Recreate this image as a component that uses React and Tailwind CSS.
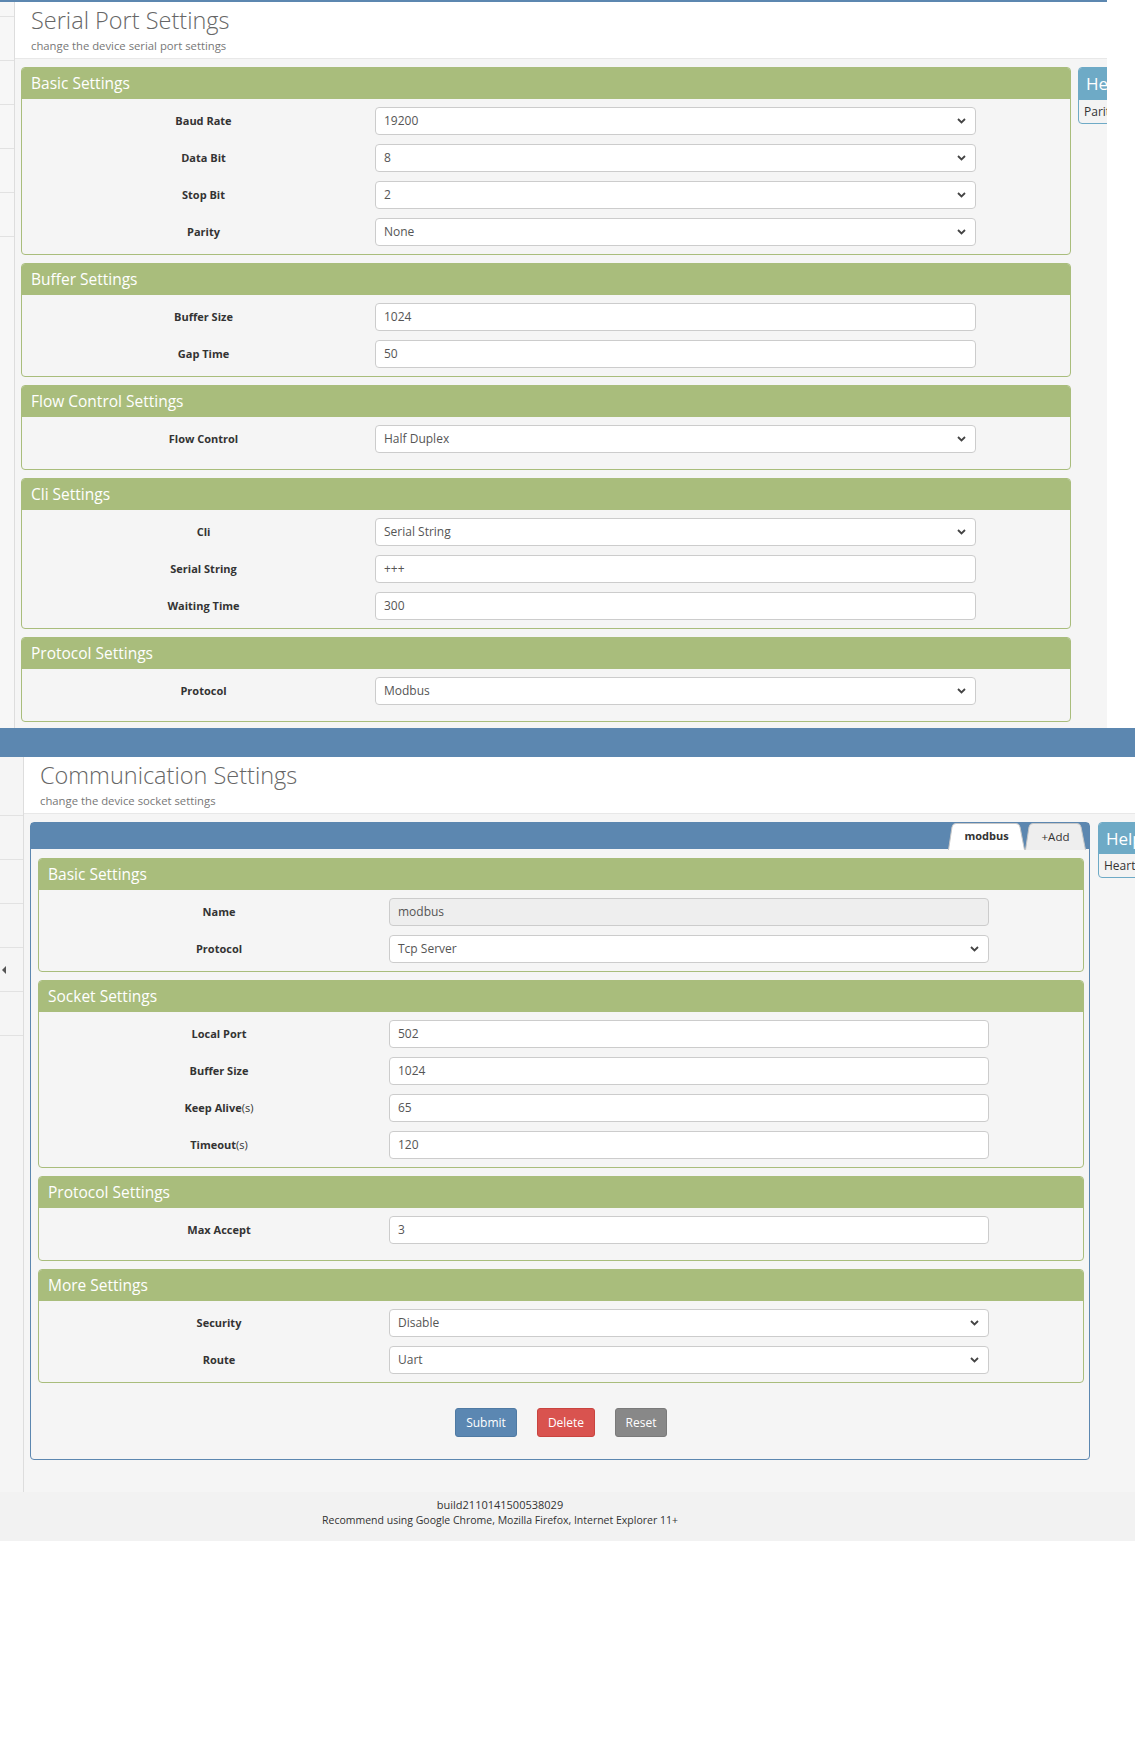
import React from "react";

function Chevron() {
  return (
    <svg width="9" height="6" viewBox="0 0 9 6" className="shrink-0">
      <path d="M1 1 L4.5 4.5 L8 1" fill="none" stroke="#444" strokeWidth="1.8" />
    </svg>
  );
}

function Field({ label, suffix, value, select, disabled, labelCls, inputCls }) {
  return (
    <div className="flex items-center h-[28px]">
      <div className={`${labelCls} text-center text-[11px] font-bold text-[#333]`}>
        {label}
        {suffix ? <span className="font-normal">{suffix}</span> : null}
      </div>
      <div
        className={`${inputCls} h-[28px] border border-[#ccc] rounded-[4px] ${
          disabled ? "bg-[#eeeeee]" : "bg-white"
        } pl-[8px] pr-[9px] flex items-center justify-between text-[12px] text-[#555]`}
      >
        <span>{value}</span>
        {select ? <Chevron /> : null}
      </div>
    </div>
  );
}

function Panel({ title, rows, wide, panelCls }) {
  const labelCls = wide ? "w-[343px]" : "w-[340px]";
  const inputCls = wide ? "w-[601px]" : "w-[600px]";
  return (
    <div className={`${panelCls} rounded-[4px] border border-[#a9bd7c] overflow-hidden`}>
      <div className="h-[31px] bg-[#a9bd7c] pl-[9px] flex items-center text-[15.5px] text-white">
        {title}
      </div>
      <div
        className={`flex flex-col gap-[9px] pt-[8px] pb-[8px] pl-[10px] ${
          rows.length === 1 ? "min-h-[52px]" : ""
        }`}
      >
        {rows.map((r, i) => (
          <Field key={i} {...r} labelCls={labelCls} inputCls={inputCls} />
        ))}
      </div>
    </div>
  );
}

function PageHeader({ title, subtitle }) {
  return (
    <div className="h-[57px] bg-white border-b border-[#e8e8e8] pl-[16px] pt-[4px]">
      <div className="text-[23.5px] leading-[28px] font-light text-[#666]">{title}</div>
      <div className="mt-[4px] text-[11.3px] leading-[16px] text-[#777]">{subtitle}</div>
    </div>
  );
}

function Help({ title, text, cls, headCls }) {
  return (
    <div className={`${cls} shrink-0 rounded-[4px] border border-[#6eaac6] bg-[#f3f3f3] overflow-hidden`}>
      <div className={`${headCls} bg-[#6eaac6] pl-[7px] flex items-center text-[17px] text-white`}>
        {title}
      </div>
      <div className="h-[23px] pl-[5px] flex items-center text-[12px] text-[#333]">{text}</div>
    </div>
  );
}

function Tab({ w, label, active, widthCls }) {
  return (
    <div className={`relative z-10 ${widthCls} h-[27px] flex items-center justify-center`}>
      <svg
        className="absolute inset-0"
        width={w}
        height="27"
        viewBox={`0 0 ${w} 27`}
        preserveAspectRatio="none"
      >
        <path
          d={`M0.5 27 L4 4 Q4.6 0.5 8 0.5 L${w - 9} 0.5 Q${w - 5.6} 0.5 ${w - 5} 4 L${w - 0.5} 27`}
          fill={active ? "#ffffff" : "#eeeeee"}
          stroke="#c6c6c6"
          strokeWidth="1"
        />
      </svg>
      <span className={`relative text-[#333] ${active ? "font-bold text-[11px]" : "text-[11.5px]"}`}>{label}</span>
    </div>
  );
}

export default function App() {
  const topPanels = [
    {
      title: "Basic Settings",
      rows: [
        { label: "Baud Rate", value: "19200", select: true },
        { label: "Data Bit", value: "8", select: true },
        { label: "Stop Bit", value: "2", select: true },
        { label: "Parity", value: "None", select: true },
      ],
    },
    {
      title: "Buffer Settings",
      rows: [
        { label: "Buffer Size", value: "1024" },
        { label: "Gap Time", value: "50" },
      ],
    },
    {
      title: "Flow Control Settings",
      rows: [{ label: "Flow Control", value: "Half Duplex", select: true }],
    },
    {
      title: "Cli Settings",
      rows: [
        { label: "Cli", value: "Serial String", select: true },
        { label: "Serial String", value: "+++" },
        { label: "Waiting Time", value: "300" },
      ],
    },
    {
      title: "Protocol Settings",
      rows: [{ label: "Protocol", value: "Modbus", select: true }],
    },
  ];

  const bottomPanels = [
    {
      title: "Basic Settings",
      rows: [
        { label: "Name", value: "modbus", disabled: true },
        { label: "Protocol", value: "Tcp Server", select: true },
      ],
    },
    {
      title: "Socket Settings",
      rows: [
        { label: "Local Port", value: "502" },
        { label: "Buffer Size", value: "1024" },
        { label: "Keep Alive", suffix: "(s)", value: "65" },
        { label: "Timeout", suffix: "(s)", value: "120" },
      ],
    },
    {
      title: "Protocol Settings",
      rows: [{ label: "Max Accept", value: "3" }],
    },
    {
      title: "More Settings",
      rows: [
        { label: "Security", value: "Disable", select: true },
        { label: "Route", value: "Uart", select: true },
      ],
    },
  ];

  return (
    <div className="w-[1135px] bg-white font-['Open_Sans',sans-serif]">
      {/* Top screenshot: Serial Port Settings */}
      <div className="w-[1107px] overflow-hidden flex flex-col">
        <div className="h-[2px] bg-[#5c87b0]" />
        <div className="flex">
          <div className="w-[15px] shrink-0 bg-[#f7f7f7] border-r border-[#dddddd] flex flex-col">
            <div className="h-[15px] border-b border-[#e2e2e2]" />
            <div className="h-[44px] border-b border-[#e2e2e2]" />
            <div className="h-[44px] border-b border-[#e2e2e2]" />
            <div className="h-[44px] border-b border-[#e2e2e2]" />
            <div className="h-[44px] border-b border-[#e2e2e2]" />
            <div className="h-[44px] border-b border-[#e2e2e2]" />
          </div>
          <div className="flex-1 min-w-0 flex flex-col overflow-hidden">
            <PageHeader title="Serial Port Settings" subtitle="change the device serial port settings" />
            <div className="bg-[#f5f5f5] flex items-start pt-[8px] pb-[6px] pl-[6px] overflow-hidden">
              <div className="w-[1050px] shrink-0 flex flex-col gap-[8px]">
                {topPanels.map((p, i) => (
                  <Panel key={i} title={p.title} rows={p.rows} wide panelCls="w-[1050px]" />
                ))}
              </div>
              <Help title="Help" text="Parity" cls="ml-[7px] w-[200px]" headCls="h-[32px]" />
            </div>
          </div>
        </div>
      </div>

      {/* Blue band */}
      <div className="h-[29px] bg-[#5c87b0]" />

      {/* Bottom screenshot: Communication Settings */}
      <div className="flex w-[1135px] overflow-hidden">
        <div className="w-[24px] shrink-0 bg-[#f5f5f5] border-r border-[#dddddd] flex flex-col">
          <div className="h-[59px] border-b border-[#e2e2e2]" />
          <div className="h-[44px] border-b border-[#e2e2e2]" />
          <div className="h-[44px] border-b border-[#e2e2e2]" />
          <div className="h-[44px] border-b border-[#e2e2e2]" />
          <div className="h-[44px] border-b border-[#e2e2e2] flex items-center pl-[2px]">
            <div className="w-0 h-0 border-y-[4px] border-y-transparent border-r-[4px] border-r-[#555]" />
          </div>
          <div className="h-[44px] border-b border-[#e2e2e2]" />
        </div>
        <div className="flex-1 min-w-0 flex flex-col overflow-hidden">
          <PageHeader title="Communication Settings" subtitle="change the device socket settings" />
          <div className="bg-[#f5f5f5] flex items-start pt-[8px] pb-[32px] pl-[6px] overflow-hidden">
            <div className="w-[1060px] shrink-0 rounded-[4px] border border-[#5c87b0]">
              <div className="h-[26px] bg-[#5c87b0] flex justify-end items-start pr-[3px]">
                <Tab w={77} widthCls="w-[77px]" label="modbus" active />
                <Tab w={61} widthCls="w-[61px]" label="+Add" />
              </div>
              <div className="pt-[9px] pl-[7px] pr-[5px] pb-[22px] flex flex-col gap-[8px]">
                {bottomPanels.map((p, i) => (
                  <Panel key={i} title={p.title} rows={p.rows} panelCls="w-[1046px]" />
                ))}
                <div className="mt-[17px] flex justify-center gap-[20px]">
                  <div className="w-[62px] h-[29px] rounded-[3px] bg-[#5b87b2] border border-[#4f7aa3] text-white text-[12px] flex items-center justify-center">
                    Submit
                  </div>
                  <div className="w-[58px] h-[29px] rounded-[3px] bg-[#d9534f] border border-[#c9443f] text-white text-[12px] flex items-center justify-center">
                    Delete
                  </div>
                  <div className="w-[52px] h-[29px] rounded-[3px] bg-[#888888] border border-[#7a7a7a] text-white text-[12px] flex items-center justify-center">
                    Reset
                  </div>
                </div>
              </div>
            </div>
            <Help title="Help" text="Heartbeat" cls="ml-[8px] w-[200px]" headCls="h-[31px]" />
          </div>
        </div>
      </div>

      {/* Footer */}
      <div className="h-[49px] bg-[#f2f2f2] pt-[5px]">
        <div className="w-[1000px] text-center">
          <div className="text-[11px] leading-[16px] text-[#333]">build2110141500538029</div>
          <div className="text-[10.5px] leading-[15px] text-[#333]">
            Recommend using Google Chrome, Mozilla Firefox, Internet Explorer 11+
          </div>
        </div>
      </div>
    </div>
  );
}
